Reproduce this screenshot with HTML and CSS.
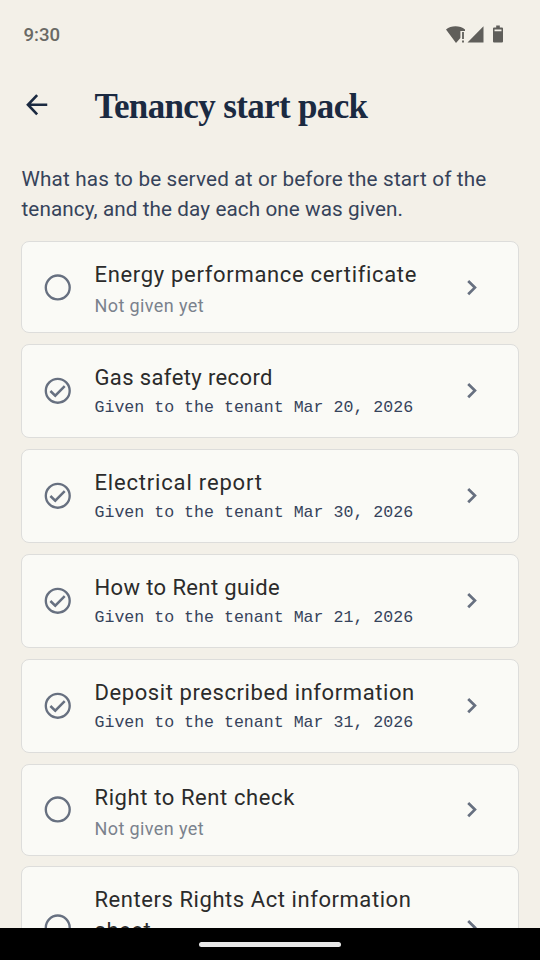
FILE: index.html
```html
<!DOCTYPE html>
<html lang="en">
<head>
<meta charset="utf-8">
<title>Tenancy start pack</title>
<link rel="stylesheet" href="styles.css">
</head>
<body>
<svg class="defs" width="0" height="0" aria-hidden="true">
  <symbol id="open" viewBox="0 0 24 24"><circle cx="12" cy="11.8" r="9.1" fill="none" stroke="currentColor" stroke-width="1.8"/></symbol>
  <symbol id="done" viewBox="0 0 24 24"><circle cx="12" cy="12" r="9.1" fill="none" stroke="currentColor" stroke-width="1.8"/><path d="M6.4 12.2l3.7 3.6 7.2-7.3" fill="none" stroke="currentColor" stroke-width="1.9"/></symbol>
  <symbol id="chevron" viewBox="0 0 24 24"><path d="M9.3 6.8l5.1 5.1-5.1 5.1" fill="none" stroke="currentColor" stroke-width="2.1"/></symbol>
</svg>
<div class="screen">
  <header class="status">
    <span class="time">9:30</span>
    <svg class="signals" width="60" height="20" viewBox="0 0 60 20">
      <path d="M0 4.6C5 .2 14 .2 19 4.6V6h-4.6v7L10 18z"/>
      <path d="M16.1 7h1.8v7h-1.8zM16.1 15.6h1.8v1.9h-1.8zM21.5 17.5L37.5 1.2v16.3z"/>
      <path fill-rule="evenodd" d="M50.2 .6h3.6v2h2.2q1 0 1 1v12.9q0 1-1 1h-8q-1 0-1-1V3.6q0-1 1-1h2.2zM48.5 4.4v1.8h7V4.4z"/>
    </svg>
  </header>
  <div class="appbar">
    <svg class="back" viewBox="0 0 24 24"><path d="M20 12H5.5M12.3 4.7L5.3 12l7 7.3" fill="none" stroke="currentColor" stroke-width="2"/></svg>
    <h1>Tenancy start pack</h1>
  </div>
  <p class="intro">What has to be served at or before the start of the<br><span class="second">tenancy, and the day each one was given.</span></p>
  <main class="list">
    <article class="card"><svg class="icon state"><use href="#open"/></svg><div class="body"><h2 class="energy">Energy performance certificate</h2><p class="pending">Not given yet</p></div><svg class="icon go"><use href="#chevron"/></svg></article>
    <article class="card given"><svg class="icon state"><use href="#done"/></svg><div class="body"><h2 class="gas">Gas safety record</h2><p class="date">Given to the tenant Mar 20, 2026</p></div><svg class="icon go"><use href="#chevron"/></svg></article>
    <article class="card given"><svg class="icon state"><use href="#done"/></svg><div class="body"><h2 class="electrical">Electrical report</h2><p class="date">Given to the tenant Mar 30, 2026</p></div><svg class="icon go"><use href="#chevron"/></svg></article>
    <article class="card given"><svg class="icon state"><use href="#done"/></svg><div class="body"><h2 class="guide">How to Rent guide</h2><p class="date">Given to the tenant Mar 21, 2026</p></div><svg class="icon go"><use href="#chevron"/></svg></article>
    <article class="card given"><svg class="icon state"><use href="#done"/></svg><div class="body"><h2 class="deposit">Deposit prescribed information</h2><p class="date">Given to the tenant Mar 31, 2026</p></div><svg class="icon go"><use href="#chevron"/></svg></article>
    <article class="card"><svg class="icon state"><use href="#open"/></svg><div class="body"><h2 class="right">Right to Rent check</h2><p class="pending">Not given yet</p></div><svg class="icon go"><use href="#chevron"/></svg></article>
    <article class="card tall"><svg class="icon state"><use href="#open"/></svg><div class="body"><h2 class="renters">Renters Rights Act information<br>sheet</h2></div><svg class="icon go"><use href="#chevron"/></svg></article>
  </main>
  <footer class="navbar"><span class="handle"></span></footer>
</div>
</body>
</html>
```
FILE: styles.css
```css
* { box-sizing: border-box; }
body { margin: 0; background: #f3f0e8; font-family: Roboto, "Liberation Sans", sans-serif; }
h1, h2, p { margin: 0; }
.defs { display: none; }
.screen { width: 540px; height: 960px; overflow: hidden; display: flex; flex-direction: column; }
.status { flex: none; height: 68px; padding: 0 35px 0 23.5px; display: flex; align-items: center; justify-content: space-between; color: #5f5e5a; }
.time { font-size: 18.6px; font-weight: 500; color: #6a6965; padding-top: 2px; }
.signals { fill: #5f5e5a; margin: 1px -1px 0 0; }
.appbar { flex: none; height: 74px; padding-left: 21px; display: flex; align-items: center; gap: 42px; color: #1b2a41; }
.back { width: 31.5px; height: 31.5px; }
h1 { font: bold 35px/44px "Liberation Serif", serif; letter-spacing: -.65px; padding-top: 3px; white-space: nowrap; }
.intro { flex: none; height: 99.25px; padding: 21.5px 0 0 21.5px; font-size: 20.7px; font-weight: 400; line-height: 30.5px; letter-spacing: .17px; color: #36435a; white-space: nowrap; }
.second { letter-spacing: .09px; }
.list { flex: 1; min-height: 0; overflow: hidden; padding: 0 21px; display: flex; flex-direction: column; gap: 10.5px; }
.card { flex: none; height: 92px; padding: 0 30.5px 0 20px; display: flex; align-items: center; gap: 21px; background: #fafaf6; border: 1px solid #dddddb; border-radius: 8px; }
.card.given { height: 94.5px; }
.card.tall { height: 122.5px; align-items: center; }
.icon { flex: none; width: 31.5px; height: 31.5px; }
.state, .go { color: #677080; }
.body { flex: 1; white-space: nowrap; padding-top: 5px; }
.given .body { padding-top: 0; }
.tall .body { align-self: flex-start; padding-top: 16.5px; }
h2 { font-size: 22px; font-weight: 400; line-height: 31px; letter-spacing: .38px; color: #2b2b2b; }
.energy { letter-spacing: .68px; }
.electrical { letter-spacing: .82px; }
.deposit { letter-spacing: .58px; }
.right { letter-spacing: .6px; }
.renters { letter-spacing: .56px; }
.pending { font-size: 18px; line-height: 28px; padding-top: 2px; letter-spacing: .4px; font-weight: 400; color: #7b828d; }
.date { font: 16.6px/26px "Liberation Mono", monospace; padding-top: 2px; color: #36435b; }
.navbar { flex: none; height: 32px; background: #000; display: flex; align-items: center; justify-content: center; }
.handle { width: 142px; height: 5px; border-radius: 3px; background: #e8e8e8; }
```
